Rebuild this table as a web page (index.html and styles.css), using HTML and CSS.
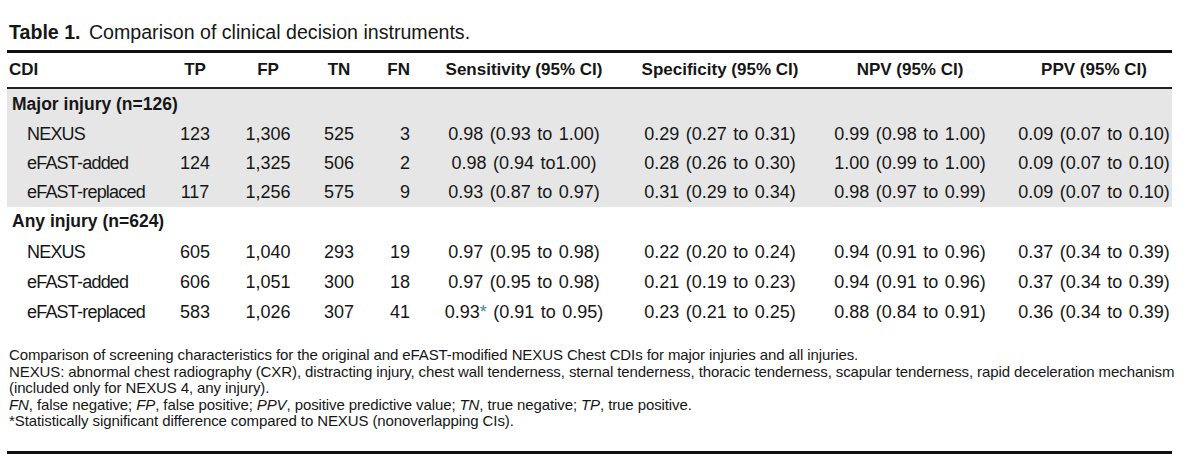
FILE: index.html
```html
<!DOCTYPE html>
<html lang="en">
<head>
    <meta charset="UTF-8">
    <title>Table 1. Comparison of clinical decision instruments</title>
    <link rel="stylesheet" href="styles.css">
</head>
<body>
    <div class="figure">
        <h1 class="table-title"><b>Table 1.</b> Comparison of clinical decision instruments.</h1>

        <table class="cdi-table">
            <colgroup>
                <col class="c-name">
                <col class="c-tp">
                <col class="c-fp">
                <col class="c-tn">
                <col class="c-fn">
                <col class="c-sens">
                <col class="c-spec">
                <col class="c-npv">
                <col class="c-ppv">
            </colgroup>
            <thead>
                <tr>
                    <th class="name">CDI</th>
                    <th>TP</th>
                    <th>FP</th>
                    <th>TN</th>
                    <th class="fn">FN</th>
                    <th>Sensitivity (95% CI)</th>
                    <th>Specificity (95% CI)</th>
                    <th>NPV (95% CI)</th>
                    <th class="ppv">PPV (95% CI)</th>
                </tr>
            </thead>
            <tbody class="shaded">
                <tr class="group">
                    <td colspan="9">Major injury (n=126)</td>
                </tr>
                <tr>
                    <td class="name">NEXUS</td>
                    <td>123</td><td>1,306</td><td>525</td><td class="fn">3</td>
                    <td>0.98 (0.93 to 1.00)</td>
                    <td>0.29 (0.27 to 0.31)</td>
                    <td>0.99 (0.98 to 1.00)</td>
                    <td class="ppv">0.09 (0.07 to 0.10)</td>
                </tr>
                <tr>
                    <td class="name">eFAST-added</td>
                    <td>124</td><td>1,325</td><td>506</td><td class="fn">2</td>
                    <td>0.98 (0.94 to1.00)</td>
                    <td>0.28 (0.26 to 0.30)</td>
                    <td>1.00 (0.99 to 1.00)</td>
                    <td class="ppv">0.09 (0.07 to 0.10)</td>
                </tr>
                <tr>
                    <td class="name">eFAST-replaced</td>
                    <td>117</td><td>1,256</td><td>575</td><td class="fn">9</td>
                    <td>0.93 (0.87 to 0.97)</td>
                    <td>0.31 (0.29 to 0.34)</td>
                    <td>0.98 (0.97 to 0.99)</td>
                    <td class="ppv">0.09 (0.07 to 0.10)</td>
                </tr>
            </tbody>
            <tbody>
                <tr class="group">
                    <td colspan="9">Any injury (n=624)</td>
                </tr>
                <tr>
                    <td class="name">NEXUS</td>
                    <td>605</td><td>1,040</td><td>293</td><td class="fn">19</td>
                    <td>0.97 (0.95 to 0.98)</td>
                    <td>0.22 (0.20 to 0.24)</td>
                    <td>0.94 (0.91 to 0.96)</td>
                    <td class="ppv">0.37 (0.34 to 0.39)</td>
                </tr>
                <tr>
                    <td class="name">eFAST-added</td>
                    <td>606</td><td>1,051</td><td>300</td><td class="fn">18</td>
                    <td>0.97 (0.95 to 0.98)</td>
                    <td>0.21 (0.19 to 0.23)</td>
                    <td>0.94 (0.91 to 0.96)</td>
                    <td class="ppv">0.37 (0.34 to 0.39)</td>
                </tr>
                <tr>
                    <td class="name">eFAST-replaced</td>
                    <td>583</td><td>1,026</td><td>307</td><td class="fn">41</td>
                    <td>0.93<span class="sig">*</span> (0.91 to 0.95)</td>
                    <td>0.23 (0.21 to 0.25)</td>
                    <td>0.88 (0.84 to 0.91)</td>
                    <td class="ppv">0.36 (0.34 to 0.39)</td>
                </tr>
            </tbody>
        </table>

        <div class="notes">
            <p>Comparison of screening characteristics for the original and eFAST-modified NEXUS Chest CDIs for major injuries and all injuries.</p>
            <p>NEXUS: abnormal chest radiography (CXR), distracting injury, chest wall tenderness, sternal tenderness, thoracic tenderness, scapular tenderness, rapid deceleration mechanism (included only for NEXUS 4, any injury).</p>
            <p><i>FN</i>, false negative; <i>FP</i>, false positive; <i>PPV</i>, positive predictive value; <i>TN</i>, true negative; <i>TP</i>, true positive.</p>
            <p>*Statistically significant difference compared to NEXUS (nonoverlapping CIs).</p>
        </div>
    </div>
</body>
</html>
```

FILE: styles.css
```css
body {
    margin: 0;
    background: #fff;
    color: #161616;
    font-family: 'Liberation Sans', Arial, sans-serif;
}
.figure {
    width: 1165px;
    margin-left: 7px;
    padding-top: 21px;
}
.table-title {
    margin: 0 0 6px 2px;
    font-size: 19.6px;
    font-weight: normal;
    line-height: 23px;
}
.table-title b {
    font-weight: bold;
    margin-right: 3px;
}
.cdi-table {
    width: 1165px;
    table-layout: fixed;
    border-collapse: collapse;
    border-top: 3px solid #111;
}
.c-name { width: 153px; }
.c-tp { width: 70px; }
.c-fp { width: 76px; }
.c-tn { width: 66px; }
.c-fn { width: 56px; }
.c-sens { width: 192px; }
.c-spec { width: 200px; }
.c-npv { width: 180px; }
.c-ppv { width: 172px; }
.cdi-table th {
    height: 34px;
    padding: 0;
    font-size: 17px;
    font-weight: bold;
    text-align: center;
    border-bottom: 2px solid #222;
}
.cdi-table td {
    height: 30px;
    padding: 0;
    font-size: 18px;
    word-spacing: 1.5px;
    text-align: center;
    white-space: nowrap;
}
.shaded td {
    height: 29px;
}
.cdi-table td.name {
    text-align: left;
    padding-left: 20px;
    letter-spacing: -0.8px;
}
.cdi-table th.name {
    padding-left: 2px;
    text-align: left;
}
.cdi-table .fn {
    text-align: right;
    padding-right: 18px;
}
.cdi-table .ppv {
    padding-left: 16px;
}
.cdi-table .group td {
    height: 30.5px;
    padding-left: 5px;
    text-align: left;
    font-size: 17.5px;
    font-weight: bold;
    word-spacing: 0;
}
.shaded {
    background: #e6e6e6;
}
.sig {
    color: #3b87b3;
}
.notes {
    margin-top: 20px;
    padding-left: 2px;
    padding-bottom: 21px;
    border-bottom: 3px solid #111;
    font-size: 15px;
    letter-spacing: -0.1px;
    line-height: 16.6px;
}
.notes p {
    margin: 0 -30px 0 0;
}
```
